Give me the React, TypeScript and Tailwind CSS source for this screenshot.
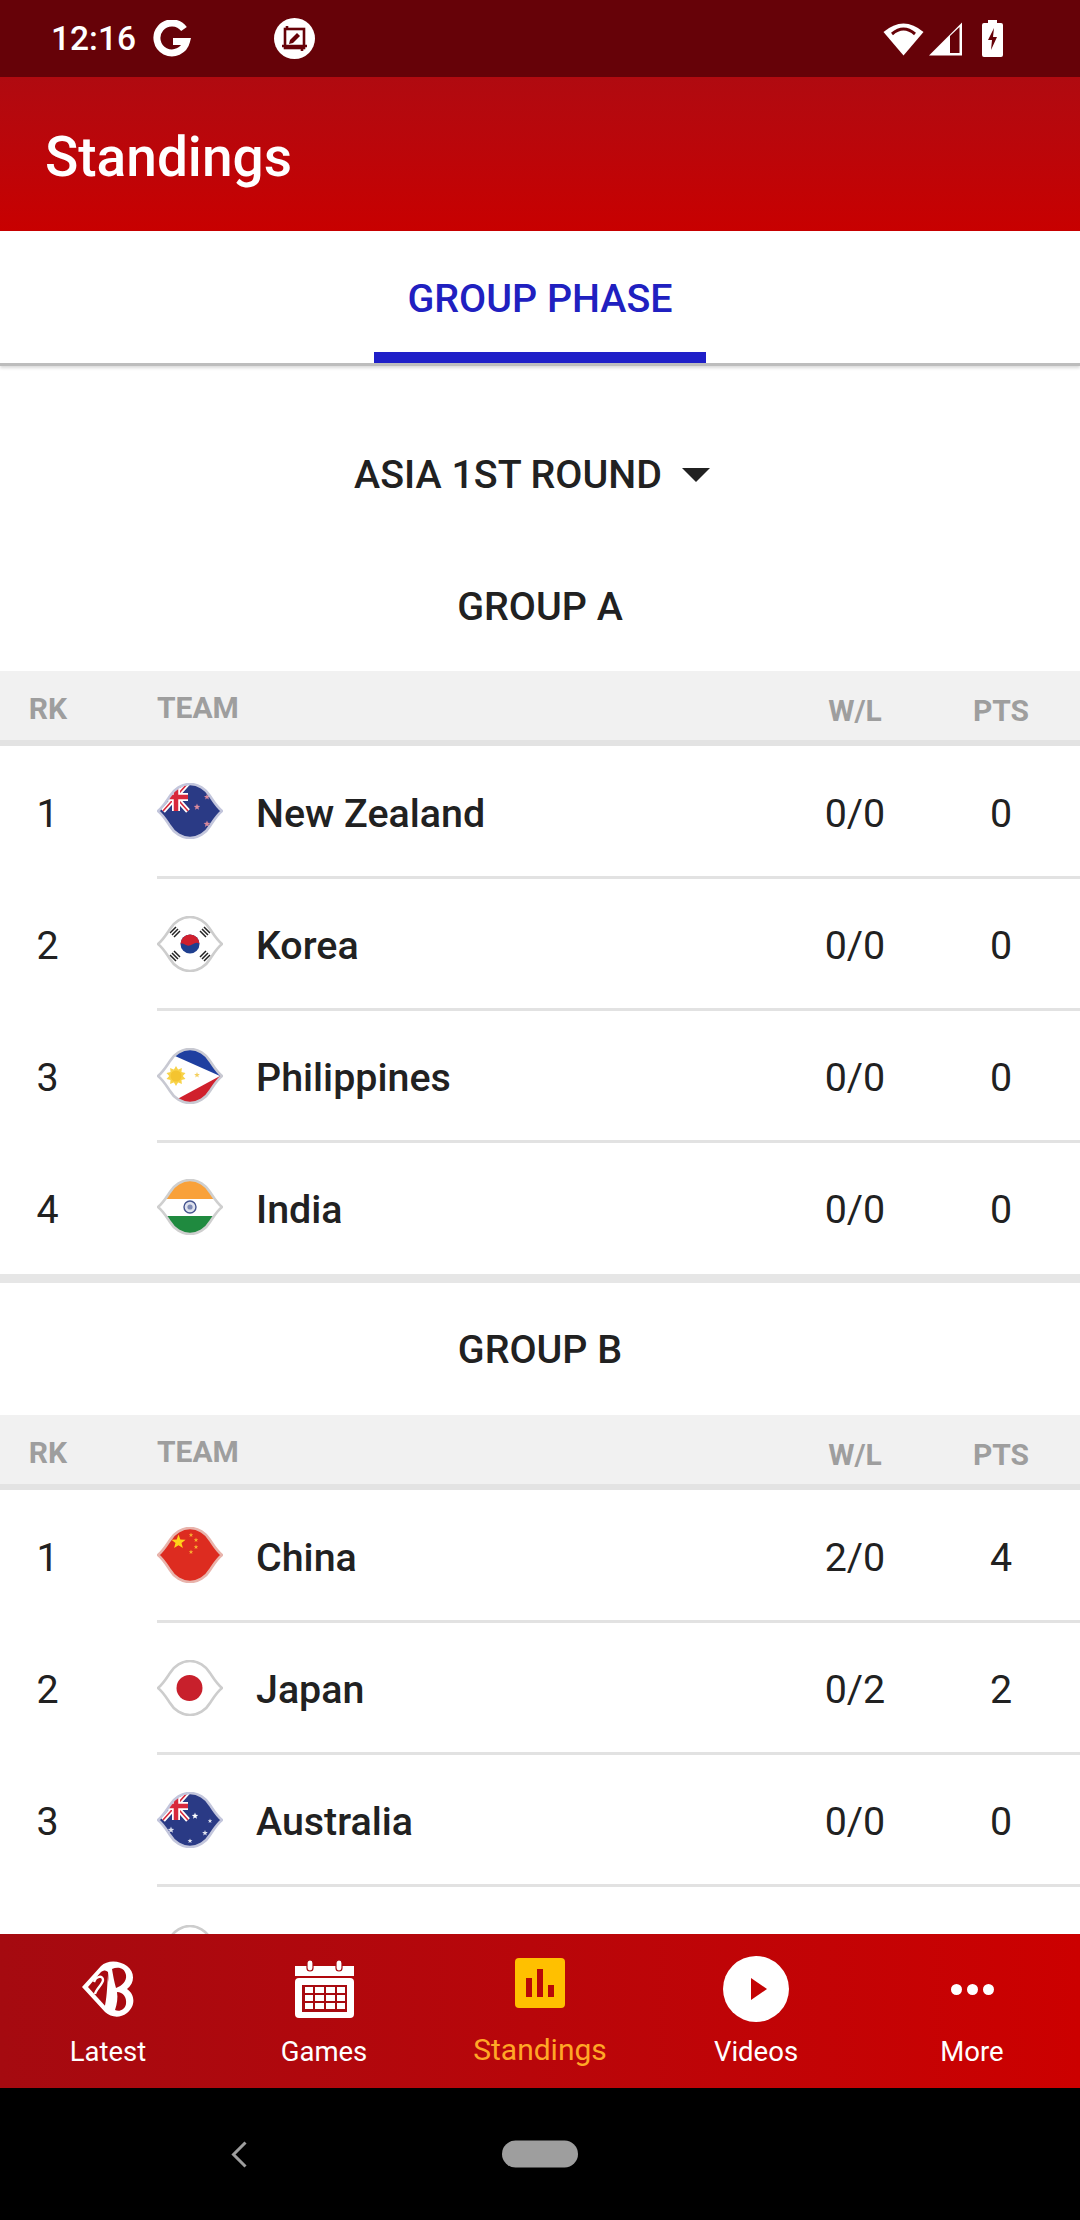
import type { ReactNode } from 'react';

const FLAG_SHAPE =
  'M1 28 C6 24 9 19 13 13 C17 6 25 1 33 1 C41 1 49 6 53 13 C57 19 60 24 65 28 C60 32 57 37 53 43 C49 50 41 55 33 55 C25 55 17 50 13 43 C9 37 6 32 1 28Z';

function star(cx: number, cy: number, r: number, inner = 0.42) {
  const pts: string[] = [];
  for (let i = 0; i < 10; i++) {
    const rad = i % 2 === 0 ? r : r * inner;
    const a = (Math.PI / 5) * i - Math.PI / 2;
    pts.push(`${(cx + rad * Math.cos(a)).toFixed(2)},${(cy + rad * Math.sin(a)).toFixed(2)}`);
  }
  return pts.join(' ');
}

function Flag({ id, edge, children }: { id: string; edge: string; children?: ReactNode }) {
  return (
    <svg viewBox="0 0 66 56" className="h-[56px] w-[66px] shrink-0">
      <defs>
        <clipPath id={id}>
          <path d={FLAG_SHAPE} />
        </clipPath>
      </defs>
      <g clipPath={`url(#${id})`}>{children}</g>
      <path d={FLAG_SHAPE} fill="none" stroke={edge} strokeWidth="2.6" />
    </svg>
  );
}

function Jack() {
  return (
    <g>
      <rect x="0" y="0" width="31" height="28" fill="#2a3a85" />
      <path d="M6 0 L31 28 M31 0 L6 28" stroke="#ffffff" strokeWidth="5" />
      <path d="M6 0 L31 28 M31 0 L6 28" stroke="#d8293c" strokeWidth="1.6" />
      <path d="M19 0 V28 M0 14 H31" stroke="#ffffff" strokeWidth="8" />
      <path d="M19 0 V28 M0 14 H31" stroke="#d8293c" strokeWidth="4.5" />
    </g>
  );
}

const flags: Record<string, ReactNode> = {
  nz: (
    <Flag id="flag-nz" edge="#c3c6dc">
      <rect width="66" height="56" fill="#2a3a85" />
      <Jack />
      <polygon points={star(40, 24, 3.4)} fill="#d98a9c" />
      <polygon points={star(50, 14, 3.2)} fill="#d98a9c" />
      <polygon points={star(50, 41, 3.6)} fill="#d98a9c" />
    </Flag>
  ),
  kr: (
    <Flag id="flag-kr" edge="#cdcdcd">
      <rect width="66" height="56" fill="#ffffff" />
      <circle cx="33" cy="28" r="9.5" fill="#1f3f8f" />
      <path d="M23.5 28 A9.5 9.5 0 0 1 42.5 28 C38 24 34 32 29 29 C27 28 25 27 23.5 28Z" fill="#d0202e" />
      <g stroke="#222222" strokeWidth="1.5">
        <path d="M13 17 L19 11 M15 19 L21 13 M17 21 L23 15" />
        <path d="M43 15 L49 21 M45 13 L51 19 M47 11 L53 17" />
        <path d="M13 39 L19 45 M15 37 L21 43 M17 35 L23 41" />
        <path d="M43 41 L49 35 M45 43 L51 37 M47 45 L53 39" />
      </g>
    </Flag>
  ),
  ph: (
    <Flag id="flag-ph" edge="#c8c9d2">
      <rect width="66" height="28" fill="#1f3fa0" />
      <rect y="28" width="66" height="28" fill="#d0202c" />
      <polygon points="0,0 63,28 0,62" fill="#ffffff" />
      <polygon points={star(19, 28, 10, 0.55)} fill="#f8d34a" />
      <polygon points={star(19, 28, 10, 0.55)} fill="#f8d34a" transform="rotate(36 19 28)" />
      <circle cx="19" cy="28" r="5.5" fill="#f4c430" />
      <polygon points={star(40, 27, 3)} fill="#f4d060" />
    </Flag>
  ),
  in: (
    <Flag id="flag-in" edge="#cfcfcf">
      <rect width="66" height="20" fill="#f9a13a" />
      <rect y="20" width="66" height="17" fill="#ffffff" />
      <rect y="37" width="66" height="19" fill="#1f8a3f" />
      <circle cx="33" cy="28" r="6" fill="#dfe2ee" stroke="#46558f" strokeWidth="1.4" />
      <circle cx="33" cy="28" r="2.6" fill="#7f8bb5" />
    </Flag>
  ),
  cn: (
    <Flag id="flag-cn" edge="#e8b4ac">
      <rect width="66" height="56" fill="#dd2c20" />
      <polygon points={star(21.5, 15, 7.5)} fill="#ffd11a" />
      <polygon points={star(34, 8, 2.4)} fill="#f8b030" />
      <polygon points={star(39, 13, 2.4)} fill="#f8b030" />
      <polygon points={star(39, 20, 2.4)} fill="#f8b030" />
      <polygon points={star(34, 25, 2.4)} fill="#f8b030" />
    </Flag>
  ),
  jp: (
    <Flag id="flag-jp" edge="#cdcdcd">
      <rect width="66" height="56" fill="#ffffff" />
      <circle cx="32.5" cy="28" r="13" fill="#c8202c" />
    </Flag>
  ),
  au: (
    <Flag id="flag-au" edge="#c3c6dc">
      <rect width="66" height="56" fill="#2a3a85" />
      <Jack />
      <polygon points={star(38, 24, 3.4)} fill="#ffffff" />
      <polygon points={star(53, 29, 2.4)} fill="#dfe2ee" />
      <polygon points={star(14, 38, 3.4)} fill="#dfe2ee" />
      <polygon points={star(48, 41, 3)} fill="#dfe2ee" />
      <polygon points={star(33, 49, 2.6)} fill="#dfe2ee" />
    </Flag>
  ),
  blank: <Flag id="flag-blank" edge="#cdcdcd" />,
};

type Row = { rank: number; flag: string; team: string; wl: string; pts: number };

const groupA: Row[] = [
  { rank: 1, flag: 'nz', team: 'New Zealand', wl: '0/0', pts: 0 },
  { rank: 2, flag: 'kr', team: 'Korea', wl: '0/0', pts: 0 },
  { rank: 3, flag: 'ph', team: 'Philippines', wl: '0/0', pts: 0 },
  { rank: 4, flag: 'in', team: 'India', wl: '0/0', pts: 0 },
];

const groupB: Row[] = [
  { rank: 1, flag: 'cn', team: 'China', wl: '2/0', pts: 4 },
  { rank: 2, flag: 'jp', team: 'Japan', wl: '0/2', pts: 2 },
  { rank: 3, flag: 'au', team: 'Australia', wl: '0/0', pts: 0 },
];

function TableHeader() {
  return (
    <div className="flex h-[75px] shrink-0 items-center border-b-[6px] border-[#e3e3e3] bg-[#f1f1f1] text-[30px] font-bold text-[#9e9e9e]">
      <div className="w-[96px] pt-[6px] text-center">RK</div>
      <div className="ml-[61px] flex-1 pt-[4px]">TEAM</div>
      <div className="w-[134px] pt-[10px] text-center">W/L</div>
      <div className="w-[158px] pt-[10px] text-center">PTS</div>
    </div>
  );
}

function TeamRow({ row, first, last }: { row: Row; first?: boolean; last?: boolean }) {
  const height = first ? 'h-[133px]' : last ? 'h-[131px]' : 'h-[132px]';
  return (
    <div className={`flex ${height} shrink-0 items-center text-[39.4px] text-[#212121]`}>
      <div className="w-[95px] pt-[2px] text-center">{row.rank}</div>
      <div
        className={`ml-[62px] flex h-full flex-1 items-center border-b-[3px] ${
          last ? 'border-transparent' : 'border-[#e2e2e2]'
        }`}
      >
        {flags[row.flag]}
        <div className="ml-[33px] flex-1 pt-[5px] font-medium">{row.team}</div>
        <div className="w-[134px] pt-[5px] text-center">{row.wl}</div>
        <div className="w-[158px] pt-[5px] text-center">{row.pts}</div>
      </div>
    </div>
  );
}

function StatusBar() {
  return (
    <div className="flex h-[77px] shrink-0 items-center bg-[#660208] text-white">
      <span className="ml-[51px] text-[33.5px] leading-none font-medium">12:16</span>
      <svg viewBox="0 0 38 38" className="ml-[17px] h-[38px] w-[38px]">
        <path
          d="M31 9 A15 15 0 1 0 33.5 21.5 H20"
          fill="none"
          stroke="#ffffff"
          strokeWidth="7"
        />
      </svg>
      <svg viewBox="0 0 41 41" className="ml-[83px] h-[41px] w-[41px]">
        <circle cx="20.5" cy="20.5" r="20.5" fill="#ffffff" />
        <rect x="11" y="11" width="19" height="19" fill="none" stroke="#660208" strokeWidth="2.6" />
        <path d="M8 28 H33 M13 8 V12 M28 29 V33" stroke="#660208" strokeWidth="2.6" />
        <path d="M15 26 L16 22 L23 15 L26 18 L19 25Z" fill="#660208" />
      </svg>
      <div className="ml-auto mr-[77px] flex items-center">
        <svg viewBox="0 0 41 34" className="h-[34px] w-[41px]">
          <path d="M20.5 33.5 L0.5 10 Q20.5 -7 40.5 10Z" fill="#ffffff" />
          <path d="M9 12 Q20.5 2 32 12" fill="none" stroke="#660208" strokeWidth="3" />
        </svg>
        <svg viewBox="0 0 33 34" className="ml-[5px] h-[34px] w-[33px]">
          <path d="M0 33.5 L33 0.5 V33.5Z" fill="#ffffff" />
          <path d="M21 14 L30.5 5 V31 H21Z" fill="#660208" />
        </svg>
        <svg viewBox="0 0 21 37" className="ml-[20px] h-[37px] w-[21px]">
          <path
            d="M6 0 H15 V3 H19 A2 2 0 0 1 21 5 V35 A2 2 0 0 1 19 37 H2 A2 2 0 0 1 0 35 V5 A2 2 0 0 1 2 3 H6Z"
            fill="#ffffff"
          />
          <path d="M12 8 L6 20 H10 L9 30 L15 17 H11Z" fill="#660208" />
        </svg>
      </div>
    </div>
  );
}

function BottomNav() {
  const label = 'mt-[15px] text-[27.5px] leading-[30px] text-white';
  return (
    <div className="grid h-[154px] shrink-0 grid-cols-5 bg-gradient-to-r from-[#a50a10] to-[#cc0000] pt-[22px]">
      <div className="flex flex-col items-center">
        <div className="flex h-[66px] items-center">
          <svg viewBox="42 22 54 57" className="h-[57px] w-[54px]">
            <path
              d="M43 48 L62 27 C68 21 80 21 88 27 C96 33 96 44 88 50 C97 56 96 68 88 74 C80 80 72 78 66 73Z"
              fill="#ffffff"
            />
            <path d="M49 48 L62 33 C65 31 67 31 69 33 L70 44 L69 60 L68 69Z" fill="#a80a10" />
            <path
              d="M55 43 C57 37 64 36 64 41 C64 45 57 50 56 55"
              fill="none"
              stroke="#ffffff"
              strokeWidth="2.4"
            />
            <path d="M69 36 C70 46 72 48 72 53 L73 73 L65 71 C68 60 68 48 69 36Z" fill="#ffffff" />
            <path d="M73 30 C79 27 86 29 87 36 C88 42 83 47 77 49 C75 42 74 36 73 30Z" fill="#a80a10" />
            <path d="M78 53 C84 53 88 58 87 65 C86 71 80 73 76 71 C78 65 79 59 78 53Z" fill="#a80a10" />
          </svg>
        </div>
        <div className={label}>Latest</div>
      </div>

      <div className="flex flex-col items-center">
        <div className="flex h-[66px] items-center">
          <svg viewBox="0 0 59 58" className="h-[58px] w-[59px]">
            <rect x="0" y="6" width="59" height="10" fill="#ffffff" />
            <rect x="0" y="18" width="59" height="40" rx="4" fill="#ffffff" />
            <rect x="7" y="25" width="45" height="27" fill="#a80a10" />
            <g fill="#ffffff">
              <rect x="10" y="27" width="8" height="6" />
              <rect x="20" y="27" width="9" height="6" />
              <rect x="31" y="27" width="9" height="6" />
              <rect x="42" y="27" width="8" height="6" />
              <rect x="10" y="35" width="8" height="6" />
              <rect x="20" y="35" width="9" height="6" />
              <rect x="31" y="35" width="9" height="6" />
              <rect x="42" y="35" width="8" height="6" />
              <rect x="10" y="43" width="8" height="6" />
              <rect x="20" y="43" width="9" height="6" />
              <rect x="31" y="43" width="9" height="6" />
              <rect x="42" y="43" width="8" height="6" />
            </g>
            <rect x="12" y="0" width="6" height="11" rx="3" fill="#ffffff" stroke="#a80a10" strokeWidth="1.2" />
            <rect x="41" y="0" width="6" height="11" rx="3" fill="#ffffff" stroke="#a80a10" strokeWidth="1.2" />
          </svg>
        </div>
        <div className={label}>Games</div>
      </div>

      <div className="flex flex-col items-center">
        <div className="flex h-[66px] items-start pt-[2px]">
          <svg viewBox="0 0 50 50" className="h-[50px] w-[50px]">
            <rect width="50" height="50" rx="4" fill="#ffc000" />
            <rect x="11" y="20" width="6" height="19" fill="#b80808" />
            <rect x="22" y="11" width="6" height="28" fill="#b80808" />
            <rect x="33" y="27" width="6" height="12" fill="#b80808" />
          </svg>
        </div>
        <div className="mt-[13px] text-[30px] leading-[30px] text-[#ffa726]">Standings</div>
      </div>

      <div className="flex flex-col items-center">
        <svg viewBox="0 0 66 66" className="h-[66px] w-[66px]">
          <circle cx="33" cy="33" r="33" fill="#ffffff" />
          <path d="M28 22 L44 33 L28 44Z" fill="#c40204" />
        </svg>
        <div className={label}>Videos</div>
      </div>

      <div className="flex flex-col items-center">
        <div className="flex h-[66px] items-center gap-[5px]">
          <div className="h-[11px] w-[11px] rounded-full bg-white" />
          <div className="h-[11px] w-[11px] rounded-full bg-white" />
          <div className="h-[11px] w-[11px] rounded-full bg-white" />
        </div>
        <div className={label}>More</div>
      </div>
    </div>
  );
}

export default function App() {
  return (
    <div className="flex h-[2220px] w-[1080px] flex-col overflow-hidden bg-white font-['Roboto',sans-serif]">
      <StatusBar />

      <div className="flex h-[154px] shrink-0 items-center bg-gradient-to-b from-[#b00a10] to-[#c80000] pl-[45px] pt-[7px] text-[55px] font-medium text-white">
        Standings
      </div>

      <div className="flex h-[135px] shrink-0 flex-col items-center border-b-[3px] border-[#bdbdbd] shadow-[0_2px_3px_rgba(0,0,0,0.15)]">
        <div className="flex flex-1 items-center pt-[14px] text-[39.4px] font-medium text-[#2020c0]">GROUP PHASE</div>
        <div className="h-[11px] w-[332px] bg-[#1f1fc8]" />
      </div>

      <div className="flex min-h-0 flex-1 flex-col overflow-hidden">
        <div className="flex h-[175px] shrink-0 items-center justify-center gap-[20px] pt-[42px] pr-[16px] text-[39.4px] font-medium text-[#212121]">
          ASIA 1ST ROUND
          <div className="h-0 w-0 border-x-[14px] border-t-[14px] border-x-transparent border-t-[#212121]" />
        </div>

        <div className="flex h-[130px] shrink-0 items-center justify-center pt-[2px] text-[39.4px] font-medium text-[#212121]">
          GROUP A
        </div>
        <TableHeader />
        {groupA.map((row, i) => (
          <TeamRow key={row.team} row={row} first={i === 0} last={i === groupA.length - 1} />
        ))}

        <div className="h-[9px] shrink-0 bg-[#e6e6e6]" />

        <div className="flex h-[132px] shrink-0 items-center justify-center pt-[2px] text-[39.4px] font-medium text-[#212121]">
          GROUP B
        </div>
        <TableHeader />
        {groupB.map((row, i) => (
          <TeamRow key={row.team} row={row} first={i === 0} />
        ))}
        <div className="ml-[157px] flex h-[132px] shrink-0 items-center">{flags.blank}</div>
      </div>

      <BottomNav />

      <div className="relative flex h-[132px] shrink-0 items-center justify-center bg-black">
        <svg viewBox="0 0 16 27" className="absolute left-[231px] top-[53px] h-[27px] w-[16px]">
          <path d="M14.5 1.5 L2.5 13.5 L14.5 25.5" fill="none" stroke="#9e9e9e" strokeWidth="3" />
        </svg>
        <div className="h-[27px] w-[76px] -translate-y-[0.5px] rounded-full bg-[#9e9e9e]" />
      </div>
    </div>
  );
}
